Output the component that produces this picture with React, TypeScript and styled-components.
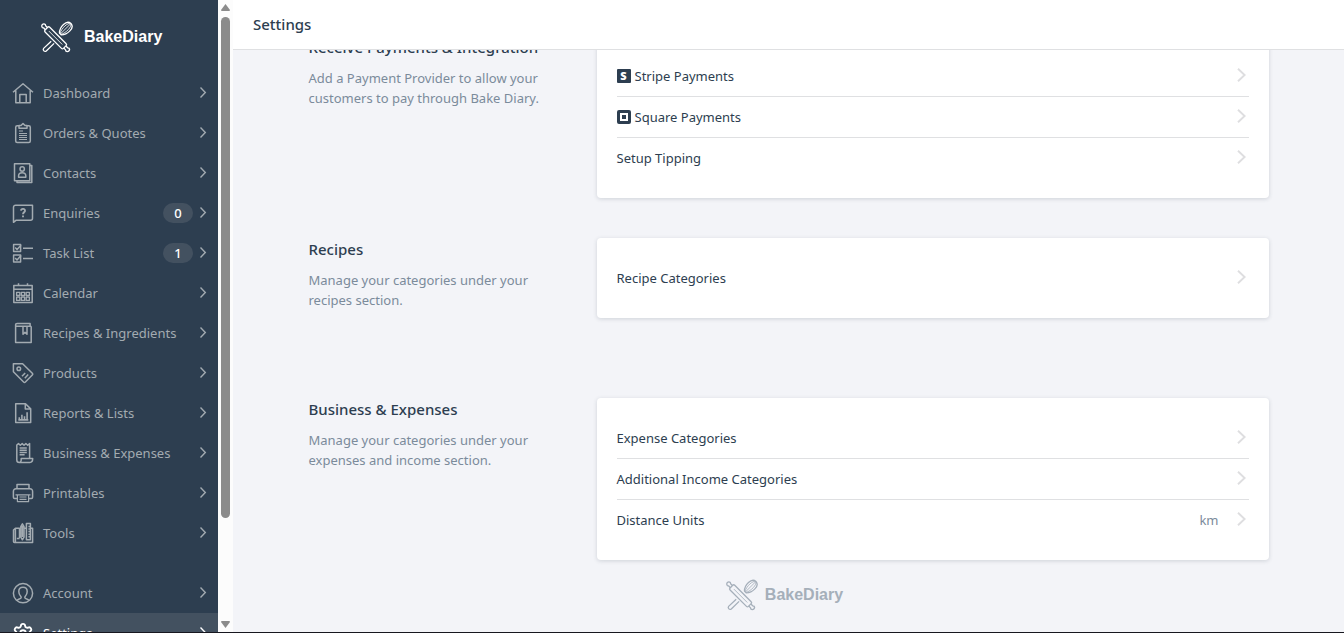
import React from "react";
import styled, { createGlobalStyle } from "styled-components";
import { Settings as GearIcon } from "lucide-react";

const color = {
  navy: "#2d3e50",
  navyLight: "#435160",
  navText: "#a3abb1",
  page: "#f3f4f8",
  line: "#dfe0e2",
  muted: "#7b8b9b",
};

const GlobalStyle = createGlobalStyle`
  *, *::before, *::after { box-sizing: border-box; }
  body {
    margin: 0;
    font-family: "Noto Sans", "Open Sans", sans-serif;
    font-size: 13px;
    line-height: 20px;
    color: ${color.navy};
    background: ${color.page};
  }
  h1, h2, p, ul { margin: 0; padding: 0; }
  ul { list-style: none; }
  a { color: inherit; text-decoration: none; }
`;

const Shell = styled.div`
  display: flex;
  height: 100vh;
  overflow: hidden;
  border-bottom: 1px solid #17171f;
`;

const Sidebar = styled.aside`
  flex: 0 0 218px;
  overflow: hidden;
  background: ${color.navy};
`;

const Brand = styled.a<{ $faded?: boolean }>`
  display: flex;
  align-items: center;
  gap: ${(p) => (p.$faded ? "7px" : "11px")};
  color: ${(p) => (p.$faded ? "#a5afba" : "#fff")};
  font: bold 16px/20px "Liberation Sans", Arial, sans-serif;
`;

const SidebarTop = styled.div`
  display: flex;
  height: 73px;
  padding: 0 0 0 41px;
`;

const NavGroup = styled.ul`
  margin-bottom: 20px;
`;

const NavLink = styled.a<{ $active?: boolean }>`
  display: flex;
  align-items: center;
  gap: 9px;
  height: 40px;
  padding: 0 11px 0 12px;
  color: ${(p) => (p.$active ? "#fff" : color.navText)};
  background: ${(p) => (p.$active ? color.navyLight : "transparent")};
`;

const NavLabel = styled.span`
  flex: 1;
  white-space: nowrap;
`;

const NavEnd = styled.span`
  display: flex;
  align-items: center;
  gap: 7px;
`;

const Badge = styled.span`
  width: 30px;
  border-radius: 10px;
  background: ${color.navyLight};
  color: #fff;
  font-weight: 500;
  text-align: center;
`;

const ScrollTrack = styled.div`
  display: flex;
  flex: 0 0 15px;
  flex-direction: column;
  align-items: center;
  padding: 4px 0;
  background: #fcfcfc;
`;

const ScrollThumb = styled.div`
  flex: 500;
  width: 9px;
  margin-top: 6px;
  border-radius: 5px;
  background: #8b8b8b;
`;

const ScrollRest = styled.div`
  flex: 103;
`;

const Main = styled.main`
  display: flex;
  flex: 1;
  flex-direction: column;
  min-width: 0;
`;

const TopBar = styled.header`
  display: flex;
  flex: 0 0 50px;
  align-items: center;
  padding: 0 20px 2px;
  border-bottom: 1px solid ${color.line};
  background: #fff;
`;

const Title = styled.h1`
  font-size: 15px;
  font-weight: 500;
  line-height: 20px;
`;

const Viewport = styled.div`
  display: flex;
  flex: 1;
  flex-direction: column;
  align-items: center;
  justify-content: flex-end;
  min-height: 0;
  overflow: hidden;
`;

const Section = styled.section`
  display: flex;
  flex-shrink: 0;
  align-items: flex-start;
  width: 100%;
  max-width: 960px;
  min-height: 120px;
  & + & { margin-top: 40px; }
`;

const Intro = styled.div`
  width: 30%;
  padding-right: 40px;
`;

const SectionTitle = styled.h2`
  margin-bottom: 10px;
  font-size: 15px;
  font-weight: 500;
  line-height: 22px;
  white-space: nowrap;
`;

const Description = styled.p`
  color: ${color.muted};
`;

const Card = styled.ul`
  width: 70%;
  && { padding: 20px; }
  border-radius: 4px;
  background: #fff;
  box-shadow: 0 1px 4px rgba(45, 62, 80, 0.18);
`;

const CardItem = styled.li`
  & + & { border-top: 1px solid ${color.line}; }
`;

const RowLink = styled.a`
  display: flex;
  align-items: center;
  gap: 4px;
  height: 40px;
  padding-right: 3px;
`;

const RowLabel = styled.span`
  flex: 1;
`;

const RowValue = styled.span`
  margin-right: 14px;
  color: ${color.muted};
`;

const StripeMark = styled.span`
  width: 14px;
  border-radius: 1px;
  background: ${color.navy};
  color: #fff;
  font-size: 11px;
  font-weight: 900;
  line-height: 14px;
  text-align: center;
`;

const SquareMark = styled.span`
  display: grid;
  place-items: center;
  width: 14px;
  height: 14px;
  border: 3px solid ${color.navy};
  border-radius: 2px;
  &::after {
    content: "";
    width: 4px;
    height: 4px;
    background: ${color.navy};
  }
`;

const Footer = styled.footer`
  flex: 0 0 72px;
  padding: 19px 0 0 0;
  margin-right: 8px;
`;

function BakeMark() {
  return (
    <svg width="32" height="32" viewBox="0 0 32 32" fill="none" stroke="currentColor" strokeWidth="1.3" strokeLinejoin="round">
      <g transform="translate(24.4 8) rotate(-45)">
        <path d="M-7 -1.4C-3 -5.4 7.6 -6.2 7.8 0C7.6 6.2 -3 5.4 -7 1.4z" />
        <path d="M-7 -.8C-2 -3.2 6 -3.2 7.8 0C6 3.2 -2 3.2 -7 .8M-7 0H7.8" strokeWidth=".8" />
      </g>
      <path d="M10.2 20.2L2.6 27.4a1.9 1.9 0 0 0 2.7 2.6l7.8-7.6" />
      <g transform="translate(14.6 16.8) rotate(45)">
        <rect x="-13" y="-3.3" width="26" height="6.6" rx="1.4" />
        <path d="M-13 -1.5h-2.6l-1-.6a2.1 2.1 0 1 0 0 4.2l1-.6h2.6M13 -1.5h2.6l1-.6a2.1 2.1 0 1 1 0 4.2l-1-.6h-2.6" />
        <path d="M-9.5 0H9.5" strokeWidth=".8" />
      </g>
    </svg>
  );
}

function Chevron({ large }: { large?: boolean }) {
  return large ? (
    <svg width="9" height="16" viewBox="0 0 9 16" fill="none" stroke="#dedee0" strokeWidth="1.9">
      <path d="M1 .8L7.6 7 1 13.2" />
    </svg>
  ) : (
    <svg width="7" height="12" viewBox="0 0 7 12" fill="none" stroke="currentColor" strokeWidth="1.4">
      <path d="M.5 .6L5.3 5.5 .5 10.4" />
    </svg>
  );
}

const icons: Record<string, React.ReactNode> = {
  home: <path d="M1 10.2L11 1.8l10 8.4M3.8 8.5v12.2h14.4V8.5M7.8 20.5v-8h6.4v8" />,
  clipboard: (
    <>
      <path d="M7 3.7H5.2a1.5 1.5 0 0 0-1.5 1.5V19a1.5 1.5 0 0 0 1.5 1.5h11.6a1.5 1.5 0 0 0 1.5-1.5V5.2a1.5 1.5 0 0 0-1.5-1.5H15" />
      <path d="M7 6.3V3.6h2L11 1.5l2 2.1h2v2.7z" />
      <path d="M7 9h4M7 11.5h8M7 13.5h8M7 15.5h8M7 17.5h8" strokeWidth="1" />
    </>
  ),
  contacts: (
    <>
      <path d="M2.5 1.7h15.3v17H2.5zM17.8 3.6h2v17H5v-1.9" />
      <circle cx="10.2" cy="7" r="2.2" />
      <path d="M6.6 15.3v-1.5c0-4.2 7.2-4.2 7.2 0v1.5z" />
    </>
  ),
  question: (
    <>
      <path d="M1.5 20.3V5.2a2 2 0 0 1 2-2h17v13a2 2 0 0 1-2 2H4.2z" />
      <path d="M9 8.6c.2-2.4 4.2-2.2 4 .2-.1 1.5-2 1.5-2 3.4M11 13.6v1.6" strokeWidth="1.9" />
    </>
  ),
  tasks: (
    <>
      <path d="M1.6 2.6h7v7h-7zM1.6 12.9h7v7h-7zM11 6.2h10M11 16.6h10" />
      <path d="M3.2 5.6L5 7.6l4-4.4M3.2 15.9L5 17.9l4-4.4" />
    </>
  ),
  calendar: (
    <>
      <path d="M1.8 3.6h18.4v17H1.8zM1.8 7.2h18.4M6.5 1.2v3M15.5 1.2v3" />
      <path d="M4.6 10.3h3.2v3.2H4.6zM9.4 10.3h3.2v3.2H9.4zM14.2 10.3h3.2v3.2h-3.2zM4.6 15.2h3.2v3.2H4.6zM9.4 15.2h3.2v3.2H9.4zM14.2 15.2h3.2v3.2h-3.2z" strokeWidth="1.3" />
    </>
  ),
  book: (
    <>
      <path d="M19.2 4.2H5.1C3 4.2 3 1.6 5.1 1.6h13v2.6M3.6 3v17.6h15.6V4.2" />
      <path d="M11 4.2v8l2-1.8 2 1.8v-8" />
    </>
  ),
  tag: (
    <>
      <path d="M1.4 1.7h9.2L20.3 11.2a1.3 1.3 0 0 1 0 1.8l-6.9 7a1.3 1.3 0 0 1-1.8 0L1.4 9.8z" />
      <circle cx="6.8" cy="6.8" r="1.8" />
      <path d="M10 14.3l3.2-3.4M12.8 16.2l3.4-3.6" />
    </>
  ),
  report: (
    <>
      <path d="M3.7 1.7h9.8l5.2 5.2v13.6H3.7zM13.3 1.7v5.4h5.4" />
      <path d="M7.3 17.8v-2.6M9.9 17.8v-5M12.5 17.8v-3.6M15.1 17.8v-7.6M6.3 17.9h10" strokeWidth="1.6" />
    </>
  ),
  receipt: (
    <>
      <path d="M17.6 16.6V1.6l-1.9 1.6-1.8-1.6-1.9 1.6-1.8-1.6-1.9 1.6-1.8-1.6-1.7 1.4V18a2.5 2.5 0 0 0 2.5 2.5h10.6c2.3 0 2.8-1.6 2.8-3.9H9.2c.2 2-.3 3.9-2 3.9" />
      <path d="M7.6 6h7.2M7.6 8.3h7.2M7.6 10.5h7.2M7.6 12.8h5" />
    </>
  ),
  printer: (
    <>
      <path d="M5 6.8V2.6h12v4.2M5 16.5H2.6a1.2 1.2 0 0 1-1.2-1.2V9.5a2.6 2.6 0 0 1 2.6-2.7h14a2.6 2.6 0 0 1 2.6 2.7v5.8a1.2 1.2 0 0 1-1.2 1.2H17" />
      <path d="M5.4 12.8h11.2v6.8H5.4zM7.5 15h7M7.5 17.3h7M3.5 12.8h15" strokeWidth="1.2" />
    </>
  ),
  tools: (
    <>
      <path d="M7.5 16V6.2H3.4L1.5 8v11.5c0 1.4 1.9 1.4 1.9 0V6.2M2.4 20.4h18.2V6.2h-2.2" />
      <path d="M8.8 4.6L10.4 1.8 12 4.6v10.6l-1.6 2.6-1.6-2.6zM8.8 4.8H12M10.4 5v10M14.4 1.5h4v16.3h-4zM16.4 4.4h2M16.4 7h2M16.4 9.6h2M16.4 12.2h2M16.4 14.8h2M4.8 16.5h2.8M12 6.2h2.4" />
    </>
  ),
  person: (
    <>
      <circle cx="11" cy="11.2" r="9.6" />
      <path d="M5 18.6c.6-1.8 4.2-1.4 4.2-3.2 0-1.3-2.4-2.4-2.4-6 0-5.6 8.4-5.6 8.4 0 0 3.6-2.4 4.7-2.4 6 0 1.8 3.6 1.4 4.2 3.2" />
    </>
  ),
};

function NavIcon({ name }: { name: string }) {
  if (name === "gear") return <GearIcon size={22} strokeWidth={2} />;
  return (
    <svg width="22" height="22" viewBox="0 0 22 22" fill="none" stroke="currentColor" strokeWidth="1.5" strokeLinejoin="round">
      {icons[name]}
    </svg>
  );
}

type NavEntry = { label: string; icon: string; count?: number; active?: boolean };

const mainNav: NavEntry[] = [
  { label: "Dashboard", icon: "home" },
  { label: "Orders & Quotes", icon: "clipboard" },
  { label: "Contacts", icon: "contacts" },
  { label: "Enquiries", icon: "question", count: 0 },
  { label: "Task List", icon: "tasks", count: 1 },
  { label: "Calendar", icon: "calendar" },
  { label: "Recipes & Ingredients", icon: "book" },
  { label: "Products", icon: "tag" },
  { label: "Reports & Lists", icon: "report" },
  { label: "Business & Expenses", icon: "receipt" },
  { label: "Printables", icon: "printer" },
  { label: "Tools", icon: "tools" },
];

const accountNav: NavEntry[] = [
  { label: "Account", icon: "person" },
  { label: "Settings", icon: "gear", active: true },
];

type Row = { label: string; mark?: React.ReactNode; value?: string };

const sections: { title: string; text: string; rows: Row[] }[] = [
  {
    title: "Receive Payments & Integration",
    text: "Add a Payment Provider to allow your customers to pay through Bake Diary.",
    rows: [
      { label: "Stripe Payments", mark: <StripeMark aria-hidden="true">S</StripeMark> },
      { label: "Square Payments", mark: <SquareMark /> },
      { label: "Setup Tipping" },
    ],
  },
  {
    title: "Recipes",
    text: "Manage your categories under your recipes section.",
    rows: [{ label: "Recipe Categories" }],
  },
  {
    title: "Business & Expenses",
    text: "Manage your categories under your expenses and income section.",
    rows: [
      { label: "Expense Categories" },
      { label: "Additional Income Categories" },
      { label: "Distance Units", value: "km" },
    ],
  },
];

function NavList({ entries }: { entries: NavEntry[] }) {
  return (
    <NavGroup>
      {entries.map((e) => (
        <li key={e.label}>
          <NavLink href="#" $active={e.active} aria-current={e.active ? "page" : undefined}>
            <NavIcon name={e.icon} />
            <NavLabel>{e.label}</NavLabel>
            <NavEnd>
              {e.count !== undefined && <Badge>{e.count}</Badge>}
              <Chevron />
            </NavEnd>
          </NavLink>
        </li>
      ))}
    </NavGroup>
  );
}

export default function App() {
  return (
    <>
      <GlobalStyle />
      <Shell>
        <Sidebar>
          <SidebarTop>
            <Brand href="#">
              <BakeMark />
              BakeDiary
            </Brand>
          </SidebarTop>
          <nav>
            <NavList entries={mainNav} />
            <NavList entries={accountNav} />
          </nav>
        </Sidebar>
        <ScrollTrack aria-hidden="true">
          <svg width="9" height="7" viewBox="0 0 9 7" fill="#8b8b8b">
            <path d="M4.5 0L9 6q0 1-1 1H1q-1 0-1-1z" />
          </svg>
          <ScrollThumb />
          <ScrollRest />
          <svg width="9" height="7" viewBox="0 0 9 7" fill="#8b8b8b">
            <path d="M4.5 7L9 1q0-1-1-1H1Q0 0 0 1z" />
          </svg>
        </ScrollTrack>
        <Main>
          <TopBar>
            <Title>Settings</Title>
          </TopBar>
          <Viewport>
            {sections.map((s) => (
              <Section key={s.title}>
                <Intro>
                  <SectionTitle>{s.title}</SectionTitle>
                  <Description>{s.text}</Description>
                </Intro>
                <Card>
                  {s.rows.map((r) => (
                    <CardItem key={r.label}>
                      <RowLink href="#">
                        {r.mark}
                        <RowLabel>{r.label}</RowLabel>
                        {r.value && <RowValue>{r.value}</RowValue>}
                        <Chevron large />
                      </RowLink>
                    </CardItem>
                  ))}
                </Card>
              </Section>
            ))}
            <Footer>
              <Brand as="div" $faded>
                <BakeMark />
                BakeDiary
              </Brand>
            </Footer>
          </Viewport>
        </Main>
      </Shell>
    </>
  );
}
